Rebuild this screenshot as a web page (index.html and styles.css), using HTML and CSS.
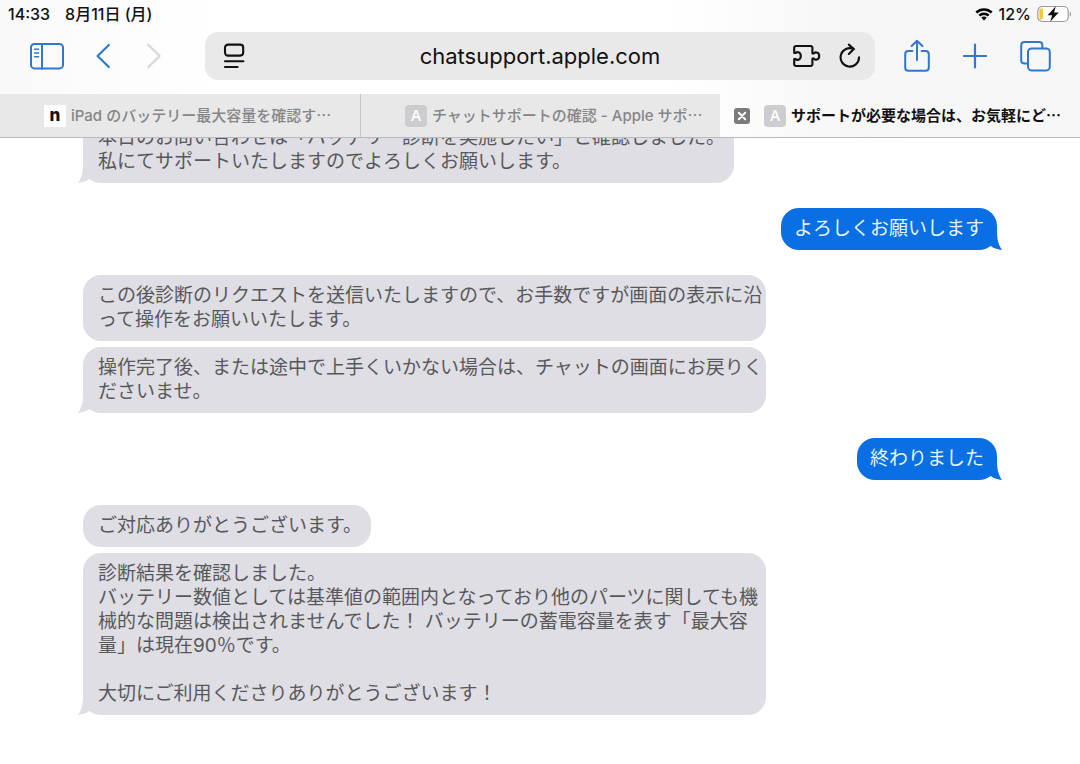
FILE: index.html
```html
<!DOCTYPE html>
<html lang="ja">
<head>
    <meta charset="UTF-8">
    <meta name="viewport" content="width=device-width, initial-scale=1.0">
    <title>サポートが必要な場合は、お気軽にどうぞ</title>
    <link rel="stylesheet" href="styles.css">
</head>
<body>
    <header class="browser">
        <div class="status_bar">
            <div class="status_left">
                <span>14:33</span>
                <span>8月11日 (月)</span>
            </div>
            <div class="status_right">
                <svg class="wifi" width="18" height="14" viewBox="0 0 18 14">
                    <path d="M0.4 4.6 A12.4 12.4 0 0 1 17.6 4.6 L15.8 6.5 A9.7 9.7 0 0 0 2.2 6.5 Z"/>
                    <path d="M3.4 7.7 A8 8 0 0 1 14.6 7.7 L12.8 9.5 A5.4 5.4 0 0 0 5.2 9.5 Z"/>
                    <path d="M6.3 10.7 A3.9 3.9 0 0 1 11.7 10.7 L9 13.5 Z"/>
                </svg>
                <span>12%</span>
                <svg class="battery" width="35" height="18" viewBox="0 0 35 18">
                    <rect x="0.8" y="1.5" width="30.4" height="15" rx="4.5" fill="#fdfdfd" stroke="#9b9b9d" stroke-width="1.2"/>
                    <rect x="2.4" y="3.6" width="3.6" height="10.8" rx="1.6" fill="#f5c638"/>
                    <path d="M32.8 6.4 C34.6 7.2 34.6 10.8 32.8 11.6 Z" fill="#9b9b9d"/>
                    <path d="M18.8 1.2 L10.6 10.2 H15.2 L13.2 16.8 L21.6 7.6 H17 Z" fill="#0b0b0b"/>
                </svg>
            </div>
        </div>

        <div class="toolbar">
            <div class="tools_left">
                <button type="button" aria-label="サイドバー">
                    <svg width="34" height="28" viewBox="0 0 34 28">
                        <rect x="1" y="2" width="32" height="24.4" rx="3.5"/>
                        <path d="M12 2 V26.4"/>
                        <path d="M4.6 7.2 H8.6 M4.6 11 H8.6 M4.6 14.8 H8.6" stroke-width="1.5"/>
                    </svg>
                </button>
                <button type="button" aria-label="戻る">
                    <svg width="18" height="28" viewBox="0 0 18 28">
                        <path d="M12.8 3 L1.6 14 L12.8 25" stroke-width="2.2"/>
                    </svg>
                </button>
                <button type="button" class="off" aria-label="進む" disabled>
                    <svg width="18" height="28" viewBox="0 0 18 28">
                        <path d="M2.4 3 L13.6 14 L2.4 25" stroke-width="2.2"/>
                    </svg>
                </button>
            </div>

            <div class="address">
                <div class="address_side">
                    <button type="button" aria-label="ページメニュー">
                        <svg width="22" height="28" viewBox="0 0 22 28">
                            <rect x="2" y="2.6" width="18.2" height="11" rx="3" stroke-width="2.1"/>
                            <path d="M2 19.2 H20.4 M2 25 H14.6" stroke-width="2.1"/>
                        </svg>
                    </button>
                </div>
                <input type="text" class="url" value="chatsupport.apple.com" aria-label="アドレス">
                <div class="address_side right">
                    <button type="button" aria-label="機能拡張">
                        <svg width="28" height="28" viewBox="0 0 28 28">
                            <path d="M1.2 11 V6 Q1.2 4 3.2 4 H17.4 Q19.4 4 19.4 6 V11.4 H21 C21.6 9.8 26.2 9.8 26.2 14 C26.2 18.2 21.6 18.2 21 16.6 H19.4 V22 Q19.4 24 17.4 24 H3.2 Q1.2 24 1.2 22 V17 H2.8 C3.4 18.4 7.8 18.4 7.8 14 C7.8 9.6 3.4 9.6 2.8 11 Z" stroke-width="2.1"/>
                        </svg>
                    </button>
                    <button type="button" aria-label="再読み込み">
                        <svg width="22" height="28" viewBox="0 0 22 28">
                            <path d="M20 15.4 A9.2 9.2 0 1 1 14.6 7" stroke-width="2.1"/>
                            <path d="M9.8 2.6 L14.8 7 L9.8 12" stroke-width="2.1"/>
                        </svg>
                    </button>
                </div>
            </div>

            <div class="tools_right">
                <button type="button" aria-label="共有">
                    <svg width="26" height="34" viewBox="0 0 26 34">
                        <path d="M8.4 12 H4.4 Q1.2 12 1.2 15.2 V28.4 Q1.2 31.8 4.4 31.8 H21.6 Q24.8 31.8 24.8 28.4 V15.2 Q24.8 12 21.6 12 H17.6"/>
                        <path d="M13 21 V2 M7.6 7 L13 1.8 L18.4 7"/>
                    </svg>
                </button>
                <button type="button" aria-label="新規タブ">
                    <svg width="24" height="34" viewBox="0 0 24 34">
                        <path d="M12 5.6 V28.4 M0.8 17 H23.2" stroke-width="2.2"/>
                    </svg>
                </button>
                <button type="button" aria-label="タブ一覧">
                    <svg width="31" height="34" viewBox="0 0 31 34">
                        <path d="M7.4 24.6 H4.6 Q1.2 24.6 1.2 21.2 V6.4 Q1.2 3 4.6 3 H19 Q22.4 3 22.4 6.4 V9.2"/>
                        <rect x="8" y="9.4" width="21.8" height="22" rx="3.6"/>
                    </svg>
                </button>
            </div>
        </div>

        <nav class="tabs">
            <a href="#" class="tab">
                <span class="favicon note">n</span>
                <span>iPad のバッテリー最大容量を確認す<span class="more">…</span></span>
            </a>
            <a href="#" class="tab">
                <span class="favicon">A</span>
                <span>チャットサポートの確認 - Apple サポ<span class="more">…</span></span>
            </a>
            <div class="tab active">
                <button type="button" class="close" aria-label="タブを閉じる">
                    <svg width="16" height="16" viewBox="0 0 16 16">
                        <path d="M4.8 4.8 L11.2 11.2 M11.2 4.8 L4.8 11.2"/>
                    </svg>
                </button>
                <span class="favicon">A</span>
                <span>サポートが必要な場合は、お気軽にど<span class="more">…</span></span>
            </div>
        </nav>
    </header>

    <main class="chat">
        <div class="group">
            <p class="bubble tail">本日のお問い合わせは「バッテリー診断を実施したい」と確認しました。<br>私にてサポートいたしますのでよろしくお願いします。</p>
        </div>
        <div class="group me">
            <p class="bubble tail">よろしくお願いします</p>
        </div>
        <div class="group">
            <p class="bubble">この後診断のリクエストを送信いたしますので、お手数ですが画面の表示に沿<br>って操作をお願いいたします。</p>
            <p class="bubble tail">操作完了後、または途中で上手くいかない場合は、チャットの画面にお戻りく<br>ださいませ。</p>
        </div>
        <div class="group me">
            <p class="bubble tail">終わりました</p>
        </div>
        <div class="group">
            <p class="bubble">ご対応ありがとうございます。</p>
            <p class="bubble tail">診断結果を確認しました。<br>バッテリー数値としては基準値の範囲内となっており他のパーツに関しても機<br>械的な問題は検出されませんでした！ バッテリーの蓄電容量を表す「最大容<br>量」は現在90％です。<br><br>大切にご利用くださりありがとうございます！</p>
        </div>
    </main>
</body>
</html>
```
FILE: styles.css
```css
*{
    margin:0;
    padding:0;
    box-sizing:border-box;
}
body{
    height:100vh;
    display:flex;
    flex-direction:column;
    overflow:hidden;
    background-color:#ffffff;
    font-family:Inter, "Noto Sans CJK JP", sans-serif;
}
button{
    display:flex;
    border:none;
    background:none;
    color:inherit;
}
svg{
    display:block;
}

/* browser bar */
.browser{
    flex:none;
    background:linear-gradient(to right, #f9f9f9, #ffffff 20%, #ffffff 62%, #f6f6f7 80%, #f7f7f8);
    border-bottom:1px solid #b9b9bb;
}
.status_bar{
    height:27px;
    padding:0 8px;
    display:flex;
    justify-content:space-between;
    align-items:center;
    font-size:16px;
    line-height:24px;
    font-weight:500;
    color:#111111;
}
.status_left{
    display:flex;
    align-items:baseline;
    gap:15px;
}
.status_right{
    display:flex;
    align-items:center;
    gap:6px;
}
.toolbar{
    padding:5px 0 14px;
    display:grid;
    grid-template-columns:205px 1fr 205px;
    align-items:center;
}
.toolbar svg{
    fill:none;
    stroke:currentColor;
    stroke-width:2;
    stroke-linecap:round;
    stroke-linejoin:round;
}
.tools_left,
.tools_right{
    display:flex;
    align-items:center;
    color:#2f78cf;
}
.tools_left{
    gap:32px;
    padding-left:30px;
}
.tools_right{
    gap:33px;
    padding-left:29px;
}
.off{
    color:#d6d6d8;
}
.address{
    height:48px;
    display:flex;
    align-items:center;
    border-radius:13px;
    background-color:#e9e9ea;
    color:#111111;
}
.address_side{
    width:98px;
    padding:0 14px 0 18px;
    display:flex;
    gap:18px;
}
.address_side.right{
    padding-left:0;
    justify-content:flex-end;
}
.url{
    flex:1;
    min-width:0;
    height:48px;
    border:none;
    outline:none;
    background:none;
    text-align:center;
    font-family:inherit;
    font-size:22px;
    color:#111111;
}

/* tabs */
.tabs{
    display:grid;
    grid-template-columns:repeat(3, 1fr);
}
.tab{
    position:relative;
    height:43px;
    padding-left:44px;
    display:flex;
    align-items:center;
    gap:5px;
    overflow:hidden;
    white-space:nowrap;
    text-decoration:none;
    font-size:15px;
    line-height:22px;
    font-weight:500;
    color:#858587;
    background-color:#e8e8e9;
}
.tab + .tab{
    border-left:1px solid #c6c6c8;
}
.tab.active{
    border-left:none;
    font-weight:700;
    color:#111111;
    background:none;
}
.more{
    font-family:"Noto Sans CJK JP", sans-serif;
}
.favicon{
    flex:none;
    width:22px;
    height:22px;
    border-radius:4px;
    background-color:#cdcdd1;
    color:#ffffff;
    text-align:center;
    font-size:15px;
    font-weight:500;
}
.favicon.note{
    border-radius:1px;
    background-color:#ffffff;
    color:#111111;
    line-height:20px;
    font-size:17px;
    font-weight:800;
}
.close{
    position:absolute;
    left:14px;
    border-radius:3px;
    background-color:#7b7b7d;
}
.close svg{
    fill:none;
    stroke:#ffffff;
    stroke-width:2;
    stroke-linecap:round;
}

/* messages, the newest one stays at the bottom */
.chat{
    flex:1;
    min-height:0;
    overflow:hidden;
    padding:0 83px 49px;
    display:flex;
    flex-direction:column;
    justify-content:flex-end;
    gap:25px;
}
.group{
    display:flex;
    flex-direction:column;
    align-items:flex-start;
    gap:6px;
}
.group.me{
    align-items:flex-end;
}
.bubble{
    position:relative;
    max-width:683px;
    padding:9px 9px 9px 15px;
    border-radius:18px;
    background-color:#dfdee4;
    color:#58585b;
    font-size:19px;
    line-height:24px;
    white-space:nowrap;
}
.me .bubble{
    padding:9px 13px;
    background-color:#0a6fe3;
    color:#e4f5ff;
}
.tail::after{
    content:"";
    position:absolute;
    left:-5px;
    bottom:0;
    width:18px;
    height:22px;
    background-color:inherit;
    clip-path:path("M5 2 C5 11 4 16 0 22 C4 21 8 21 11 18 L18 20 L18 2 Z");
}
.me .tail::after{
    left:auto;
    right:-5px;
    transform:scaleX(-1);
}
```
